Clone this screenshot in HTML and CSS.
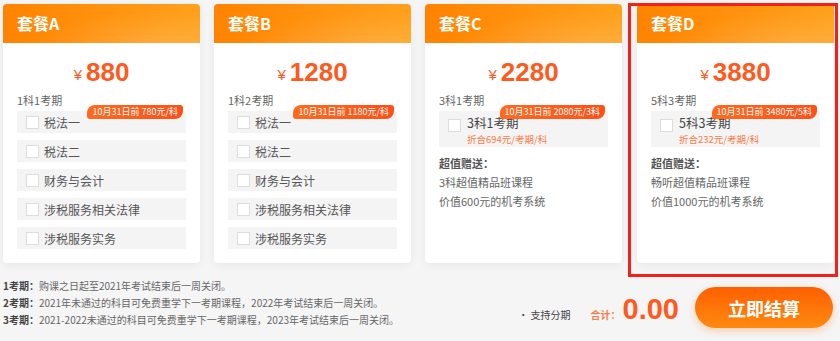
FILE: index.html
```html
<!DOCTYPE html>
<html lang="zh-CN">
<head>
    <meta charset="UTF-8">
    <title>套餐选择</title>
    <link rel="stylesheet" href="styles.css">
</head>
<body>
    <div class="plans">
        <div class="plan">
            <div class="plan-head">套餐A</div>
            <div class="plan-price"><span class="yen">¥</span>880</div>
            <div class="plan-term">1科1考期</div>
            <div class="subjects">
                <span class="tag">10月31日前 780元/科</span>
                <label class="subject"><i class="box"></i>税法一</label>
                <label class="subject"><i class="box"></i>税法二</label>
                <label class="subject"><i class="box"></i>财务与会计</label>
                <label class="subject"><i class="box"></i>涉税服务相关法律</label>
                <label class="subject"><i class="box"></i>涉税服务实务</label>
            </div>
        </div>

        <div class="plan">
            <div class="plan-head">套餐B</div>
            <div class="plan-price"><span class="yen">¥</span>1280</div>
            <div class="plan-term">1科2考期</div>
            <div class="subjects">
                <span class="tag">10月31日前 1180元/科</span>
                <label class="subject"><i class="box"></i>税法一</label>
                <label class="subject"><i class="box"></i>税法二</label>
                <label class="subject"><i class="box"></i>财务与会计</label>
                <label class="subject"><i class="box"></i>涉税服务相关法律</label>
                <label class="subject"><i class="box"></i>涉税服务实务</label>
            </div>
        </div>

        <div class="plan">
            <div class="plan-head">套餐C</div>
            <div class="plan-price"><span class="yen">¥</span>2280</div>
            <div class="plan-term">3科1考期</div>
            <div class="subjects">
                <span class="tag">10月31日前 2080元/3科</span>
                <label class="subject subject-big">
                    <i class="box"></i>
                    <div>
                        <span class="name">3科1考期</span>
                        <span class="unit">折合694元/考期/科</span>
                    </div>
                </label>
            </div>
            <div class="gift">
                <b>超值赠送：</b>
                <p>3科超值精品班课程</p>
                <p>价值600元的机考系统</p>
            </div>
        </div>

        <div class="plan selected">
            <div class="plan-head">套餐D</div>
            <div class="plan-price"><span class="yen">¥</span>3880</div>
            <div class="plan-term">5科3考期</div>
            <div class="subjects">
                <span class="tag">10月31日前 3480元/5科</span>
                <label class="subject subject-big">
                    <i class="box"></i>
                    <div>
                        <span class="name">5科3考期</span>
                        <span class="unit">折合232元/考期/科</span>
                    </div>
                </label>
            </div>
            <div class="gift">
                <b>超值赠送：</b>
                <p>畅听超值精品班课程</p>
                <p>价值1000元的机考系统</p>
            </div>
        </div>
    </div>

    <div class="footer">
        <div class="notes">
            <p><b>1考期：</b>购课之日起至2021年考试结束后一周关闭。</p>
            <p><b>2考期：</b>2021年未通过的科目可免费重学下一考期课程，2022年考试结束后一周关闭。</p>
            <p><b>3考期：</b>2021-2022未通过的科目可免费重学下一考期课程，2023年考试结束后一周关闭。</p>
        </div>
        <div class="checkout">
            <span class="installment">• 支持分期</span>
            <span class="total-label">合计：</span>
            <span class="total">0.00</span>
            <button class="pay-btn">立即结算</button>
        </div>
    </div>
</body>
</html>
```

FILE: styles.css
```css
body {
    margin: 0;
    background: #f5f5f6;
    font-family: "Noto Sans CJK SC", "Liberation Sans", sans-serif;
    color: #555;
    width: 840px;
    height: 341px;
    overflow: hidden;
}
.plans {
    display: flex;
    gap: 14px;
    padding: 4px 0 0 3px;
}
.plan {
    position: relative;
    width: 197px;
    height: 259px;
    background: #fff;
    border-radius: 4px;
    box-shadow: 0 2px 8px rgba(0,0,0,0.06);
}
.plan:last-child {
    margin-left: 1px;
}
.selected::after {
    content: "";
    position: absolute;
    left: -9px;
    right: -4px;
    top: -1px;
    bottom: -14px;
    border: 3px solid #f5201a;
    pointer-events: none;
}
.plan-head {
    height: 39px;
    line-height: 39px;
    padding-left: 14px;
    border-radius: 4px 4px 0 0;
    color: #fff;
    font-size: 16px;
    font-weight: bold;
    background:
        radial-gradient(ellipse at 80% 120%, rgba(255,255,255,0.18), rgba(255,255,255,0) 60%),
        linear-gradient(90deg, #ff8300, #ffa11c);
}
.plan-price {
    text-align: center;
    padding-top: 14px;
    height: 30px;
    line-height: 30px;
    color: #ff5a1e;
    font-size: 26px;
    font-weight: bold;
    font-family: "Liberation Sans", "Noto Sans CJK SC", sans-serif;
}
.yen {
    font-size: 15px;
    font-weight: normal;
    margin-right: 4px;
    vertical-align: 1px;
}
.plan-term {
    padding: 0 14px;
    margin-top: 6px;
    font-size: 11px;
    line-height: 14px;
    color: #666;
}
.subjects {
    position: relative;
    display: flex;
    flex-direction: column;
    gap: 7px;
    margin: 4px 14px 0;
}
.tag {
    position: absolute;
    top: -6px;
    right: 3px;
    height: 14px;
    line-height: 14px;
    padding: 0 5px;
    border-radius: 8px 3px 8px 3px;
    background: linear-gradient(90deg, #ff6a1e, #ff4f17);
    color: #fff;
    font-size: 9px;
    z-index: 1;
}
.subject {
    display: flex;
    align-items: center;
    height: 22px;
    padding-left: 9px;
    background: #f4f4f4;
    font-size: 12px;
    color: #555;
}
.box {
    width: 11px;
    height: 11px;
    border: 1px solid #ddd;
    background: #fff;
    margin-right: 5px;
}
.subject-big {
    height: 36px;
    align-items: flex-start;
    padding-top: 4px;
    box-sizing: border-box;
}
.subject-big .box {
    margin-top: 4px;
    margin-right: 6px;
}
.name {
    display: block;
    font-size: 12.5px;
    line-height: 16px;
    color: #444;
}
.unit {
    display: block;
    font-size: 9.5px;
    line-height: 16px;
    color: #ff7a45;
}
.gift {
    margin: 6px 14px 0;
    font-size: 11px;
    line-height: 20px;
    color: #666;
}
.gift b {
    color: #555;
}
.gift p {
    margin: 0;
    line-height: 19px;
}
.footer {
    display: flex;
    justify-content: space-between;
    align-items: flex-end;
    padding: 14px 7px 8px 3px;
}
.notes p {
    margin: 0;
    font-size: 10px;
    line-height: 17px;
    color: #666;
}
.notes b {
    color: #444;
}
.checkout {
    display: flex;
    align-items: center;
}
.installment {
    font-size: 10px;
    color: #444;
    margin-top: 14px;
}
.total-label {
    margin-left: 20px;
    margin-right: 2px;
    margin-top: 14px;
    font-size: 10px;
    font-weight: bold;
    color: #ff7a45;
}
.total {
    font-family: "Liberation Sans", "Noto Sans CJK SC", sans-serif;
    font-size: 29px;
    font-weight: bold;
    color: #ff5a1e;
    margin-top: 4px;
}
.pay-btn {
    margin-left: 16px;
    width: 138px;
    height: 41px;
    border: none;
    border-radius: 21px;
    background: linear-gradient(180deg, #ff5f00, #ff8a10);
    box-shadow: 0 3px 8px rgba(255,110,0,0.3);
    color: #fff;
    font-family: "Noto Sans CJK SC", sans-serif;
    font-size: 18px;
    font-weight: bold;
    cursor: pointer;
}
```
